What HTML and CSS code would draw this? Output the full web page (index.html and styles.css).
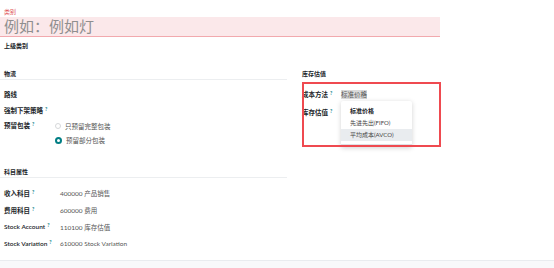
FILE: index.html
```html
<!DOCTYPE html>
<html>
  <head>
    <title>产品类别</title>
    <link rel="stylesheet" href="styles.css">
  </head>

  <body>
    <div class="sheet">
      <div class="title-block">
        <div class="cat-label">类别</div>
        <div class="name-input">例如：例如灯</div>
        <div class="parent-label">上级类别</div>
      </div>

      <div class="groups">
        <div class="col col-left">
          <div class="group">
            <div class="group-title">物流</div>
            <div class="rows">
              <div class="row"><span class="label">路线</span></div>
              <div class="row"><span class="label">强制下架策略<span class="tip">?</span></span></div>
              <div class="row row-radio">
                <span class="label">预留包装<span class="tip">?</span></span>
                <div class="radio-group">
                  <div class="radio-opt"><span class="radio"></span>只预留完整包装</div>
                  <div class="radio-opt"><span class="radio checked"></span>预留部分包装</div>
                </div>
              </div>
            </div>
          </div>

          <div class="group group-accounts">
            <div class="group-title">科目属性</div>
            <div class="rows rows-accounts">
              <div class="row"><span class="label">收入科目<span class="tip">?</span></span><span class="value">400000 产品销售</span></div>
              <div class="row"><span class="label">费用科目<span class="tip">?</span></span><span class="value">600000 费用</span></div>
              <div class="row"><span class="label">Stock Account<span class="tip">?</span></span><span class="value">110100 库存估值</span></div>
              <div class="row"><span class="label">Stock Variation<span class="tip">?</span></span><span class="value">610000 Stock Variation</span></div>
            </div>
          </div>
        </div>

        <div class="col col-right">
          <div class="group">
            <div class="group-title no-line">库存估值</div>
            <div class="rows rows-right">
              <div class="row"><span class="label">成本方法<span class="tip">?</span></span><span class="value"><span class="picked">标准价格</span></span></div>
              <div class="row"><span class="label">库存估值<span class="tip">?</span></span></div>
            </div>
          </div>

          <!-- open select menu -->
          <div class="dropdown">
            <div class="dd-item dd-title">标准价格</div>
            <div class="dd-item">先进先出(FIFO)</div>
            <div class="dd-item active">平均成本(AVCO)</div>
            <div class="dd-sep"></div>
          </div>

          <!-- highlight frame -->
          <div class="mark"></div>
        </div>
      </div>

      <div class="footer"></div>
    </div>
  </body>
</html>
```

FILE: styles.css
```css
body {
  margin: 0;
  font-family: Lato, "Noto Sans CJK SC", sans-serif;
  font-size: 6.5px;
  color: #212529;
  background: #fff;
}

.sheet {
  height: 268px;
  display: flex;
  flex-direction: column;
}

/* title */
.title-block {
  padding: 8px 0 0 4px;
}

.cat-label {
  font-size: 6px;
  line-height: 8px;
  color: #e0565c;
}

.name-input {
  box-sizing: border-box;
  width: 440px;
  height: 20px;
  margin: 1px 0 0 -4px;
  padding-left: 4px;
  line-height: 19px;
  font-size: 15px;
  color: #8f8f8f;
  background: #fbe8ea;
  border-bottom: 1px solid #f2a9ae;
}

.parent-label {
  margin-top: 5px;
  line-height: 8px;
  font-size: 6px;
  font-weight: 700;
}

/* groups */
.groups {
  display: flex;
  gap: 15px;
  margin-top: 20px;
}

.col-left {
  width: 287px;
}

.col-right {
  position: relative;
  width: 139px;
}

.group-title {
  padding: 0 0 1px 4px;
  line-height: 8px;
  font-size: 6px;
  font-weight: 700;
  border-bottom: 1px solid #eceef0;
}

.group-title.no-line {
  padding-left: 0;
  border-bottom-color: transparent;
}

.rows {
  padding: 6px 0 0 4px;
}

.row {
  display: grid;
  grid-template-columns: 56px 1fr;
  align-items: center;
  height: 16px;
}

.label {
  font-weight: 600;
  white-space: nowrap;
}

.value {
  color: #555;
  white-space: nowrap;
}

.tip {
  position: relative;
  top: -2px;
  margin-left: 2px;
  font-size: 5px;
  font-weight: 700;
  color: #017e84;
}

.row-radio {
  align-items: start;
  height: auto;
  margin-top: 1px;
}

.row-radio .label {
  line-height: 14px;
}

.radio-group {
  margin-left: -5px;
}

.radio-opt {
  display: flex;
  align-items: center;
  gap: 4px;
  height: 14px;
  color: #555;
}

.radio {
  box-sizing: border-box;
  width: 6px;
  height: 6px;
  border: 1px solid #d6d8da;
  border-radius: 50%;
  background: #fff;
}

.radio.checked {
  width: 7px;
  height: 7px;
  border: 2px solid #017e84;
}

.group-accounts {
  margin-top: 21px;
}

.rows-accounts .row {
  height: 17px;
}

.rows-right {
  padding: 5px 0 0 0;
}

.rows-right .row {
  grid-template-columns: 39px 1fr;
  height: 18px;
}

.picked {
  padding: 1px 0;
  background: #dadada;
  color: #555;
}

/* select menu */
.dropdown {
  position: absolute;
  left: 39px;
  top: 31px;
  width: 71px;
  padding-top: 4px;
  background: #fff;
  border-radius: 2px;
  box-shadow: 0 1px 5px rgba(0, 0, 0, 0.18);
  z-index: 1;
}

.dd-item {
  padding-left: 9px;
  line-height: 12px;
  font-size: 6px;
  color: #444;
  white-space: nowrap;
}

.dd-title {
  font-weight: 700;
  color: #212529;
}

.dd-item.active {
  background: #e9ecef;
}

.dd-sep {
  height: 2px;
  margin-top: 3px;
  border-top: 1px solid #dee2e6;
}

.mark {
  position: absolute;
  left: 0;
  top: 12px;
  box-sizing: border-box;
  width: 139px;
  height: 65px;
  border: 2px solid #ef4a50;
  z-index: 2;
}

.footer {
  margin-top: auto;
  height: 7px;
  background: #f8f9fa;
  border-top: 1px solid #e9ecef;
}
```
